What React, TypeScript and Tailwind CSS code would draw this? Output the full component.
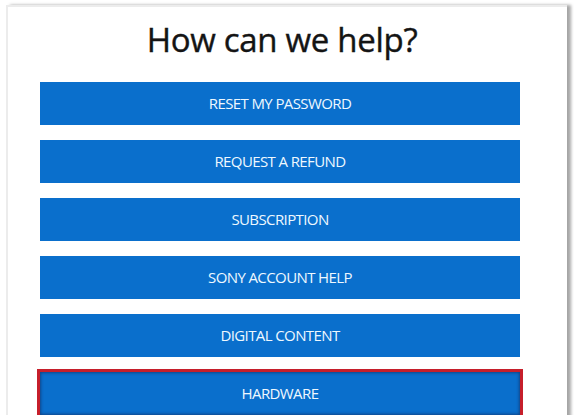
const topics = [
  "RESET MY PASSWORD",
  "REQUEST A REFUND",
  "SUBSCRIPTION",
  "SONY ACCOUNT HELP",
  "DIGITAL CONTENT",
  "HARDWARE",
];

function TopicButton({ label, highlighted }: { label: string; highlighted?: boolean }) {
  return (
    <button
      type="button"
      className={
        "flex h-[43px] w-[480px] items-center justify-center bg-[#0a6fcc] text-[15px] tracking-[-0.6px] text-[#eef8ff] " +
        (highlighted
          ? "outline-[3px] outline-solid outline-[#c61f2b] shadow-[inset_0_0_3px_1px_rgba(20,40,90,0.6)]"
          : "")
      }
    >
      {label}
    </button>
  );
}

export default function App() {
  return (
    <div className="h-[415px] w-[574px] overflow-hidden bg-white font-['Open_Sans',sans-serif]">
      <div className="ml-[6px] mt-[5px] h-[420px] w-[561px] border-l-2 border-t-2 border-[#ececec] bg-white shadow-[4px_0_3px_0_rgba(0,0,0,0.35)]">
        <div className="flex w-[548px] flex-col items-center">
          <h1 className="mt-[12px] text-[33px] font-medium leading-[42px] tracking-[-0.3px] text-[#141414] [-webkit-text-stroke:0.4px_#141414]">
            How can we help?
          </h1>
        </div>
        <div className="mt-[21px] ml-[32px] flex flex-col gap-[15px]">
          {topics.map((t) => (
            <TopicButton key={t} label={t} highlighted={t === "HARDWARE"} />
          ))}
        </div>
      </div>
    </div>
  );
}
